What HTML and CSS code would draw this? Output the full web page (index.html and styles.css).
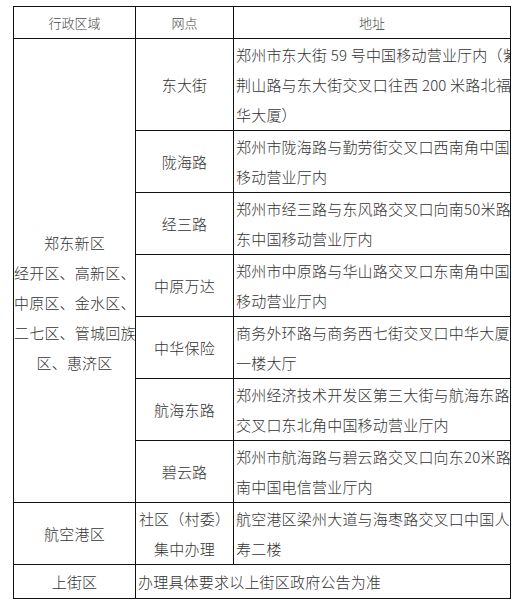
FILE: index.html
```html
<!DOCTYPE html>
<html lang="zh-CN">
<head>
<meta charset="utf-8">
<title>网点地址</title>
<link rel="stylesheet" href="styles.css">
</head>
<body>
<table class="grid">
  <colgroup>
    <col class="c1">
    <col class="c2">
    <col class="c3">
  </colgroup>
  <thead>
    <tr class="head">
      <th>行政区域</th>
      <th>网点</th>
      <th>地址</th>
    </tr>
  </thead>
  <tbody>
    <tr class="r3">
      <td rowspan="7" class="region">
        <div class="ln">郑东新区</div>
        <div class="ln">经开区、高新区、</div>
        <div class="ln">中原区、金水区、</div>
        <div class="ln">二七区、管城回族</div>
        <div class="ln">区、惠济区</div>
      </td>
      <td class="site">东大街</td>
      <td class="addr"><div class="clip"><div class="ln">郑州市东大街 59 号中国移动营业厅内（紫</div><div class="ln">荆山路与东大街交叉口往西 200 米路北福</div><div class="ln">华大厦）</div></div></td>
    </tr>
    <tr class="r2">
      <td class="site">陇海路</td>
      <td class="addr"><div class="clip"><div class="ln">郑州市陇海路与勤劳街交叉口西南角中国</div><div class="ln">移动营业厅内</div></div></td>
    </tr>
    <tr class="r2">
      <td class="site">经三路</td>
      <td class="addr"><div class="clip"><div class="ln">郑州市经三路与东风路交叉口向南50米路</div><div class="ln">东中国移动营业厅内</div></div></td>
    </tr>
    <tr class="r2">
      <td class="site">中原万达</td>
      <td class="addr"><div class="clip"><div class="ln">郑州市中原路与华山路交叉口东南角中国</div><div class="ln">移动营业厅内</div></div></td>
    </tr>
    <tr class="r2">
      <td class="site">中华保险</td>
      <td class="addr"><div class="clip"><div class="ln">商务外环路与商务西七街交叉口中华大厦</div><div class="ln">一楼大厅</div></div></td>
    </tr>
    <tr class="r2">
      <td class="site">航海东路</td>
      <td class="addr"><div class="clip"><div class="ln">郑州经济技术开发区第三大街与航海东路</div><div class="ln">交叉口东北角中国移动营业厅内</div></div></td>
    </tr>
    <tr class="r2">
      <td class="site">碧云路</td>
      <td class="addr"><div class="clip"><div class="ln">郑州市航海路与碧云路交叉口向东20米路</div><div class="ln">南中国电信营业厅内</div></div></td>
    </tr>
    <tr class="r2">
      <td class="site">航空港区</td>
      <td class="site"><div class="clip"><div class="ln">社区（村委）</div><div class="ln">集中办理</div></div></td>
      <td class="addr"><div class="clip"><div class="ln">航空港区梁州大道与海枣路交叉口中国人</div><div class="ln">寿二楼</div></div></td>
    </tr>
    <tr class="r1">
      <td class="site">上街区</td>
      <td class="addr" colspan="2"><div class="clip"><div class="ln">办理具体要求以上街区政府公告为准</div></div></td>
    </tr>
  </tbody>
</table>
</body>
</html>
```
FILE: styles.css
```css
html, body {
  margin: 0;
  padding: 0;
  background: #ffffff;
}

body {
  font-family: "Noto Sans CJK SC", "Noto Sans", sans-serif;
  font-weight: 300;
  color: #333333;
}

.grid {
  margin: 6px 0 0 13px;
  width: 497px;
  table-layout: fixed;
  border-collapse: collapse;
  font-size: 15px;
  letter-spacing: 0.2px;
  line-height: 30px;
}

.c1 { width: 122px; }
.c2 { width: 98px; }
.c3 { width: 277px; }

.grid th,
.grid td {
  border: 1px solid #111111;
  padding: 0;
  vertical-align: middle;
}

.grid th {
  font-weight: 300;
  font-size: 13px;
  letter-spacing: 0;
  color: #444444;
  height: 31px;
}

.r3 td { height: 91px; }
.r2 td { height: 61px; }
.r1 td { height: 33px; }

.region {
  text-align: center;
  padding-top: 64px !important;
}

.region .ln {
  white-space: nowrap;
  overflow: hidden;
}

.site {
  text-align: center;
}

.addr {
  text-align: left;
  padding-left: 2px !important;
}

.clip {
  overflow: hidden;
}

.ln {
  white-space: nowrap;
}
```
